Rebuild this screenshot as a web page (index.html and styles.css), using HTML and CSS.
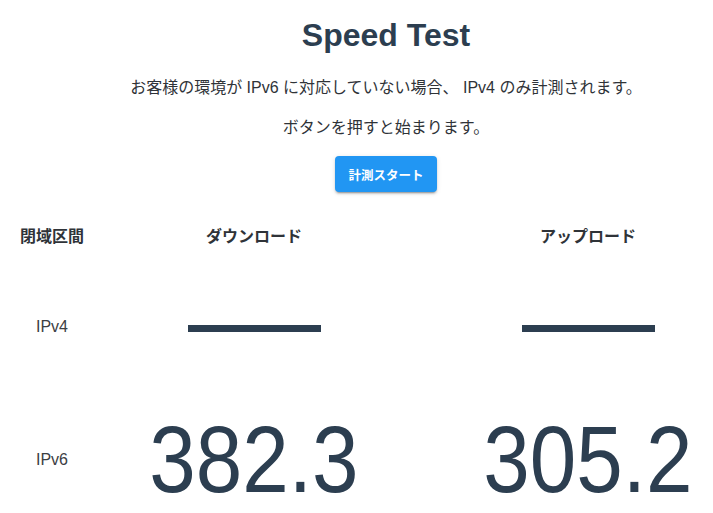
FILE: index.html
```html
<!DOCTYPE html>
<html lang="ja">
<head>
<meta charset="utf-8">
<title>Speed Test</title>
<link rel="stylesheet" href="styles.css">
</head>
<body>
<div class="app">
  <div class="intro">
    <h1 class="title">Speed Test</h1>
    <p class="note">お客様の環境が IPv6 に対応していない場合、 IPv4 のみ計測されます。</p>
    <p class="note">ボタンを押すと始まります。</p>
    <div class="actions">
      <button class="start-btn" type="button">計測スタート</button>
    </div>
  </div>
  <div class="results">
    <div class="cell head">閉域区間</div>
    <div class="cell head">ダウンロード</div>
    <div class="cell head last">アップロード</div>

    <div class="cell label">IPv4</div>
    <div class="cell value"><span class="dash"></span></div>
    <div class="cell value last"><span class="dash"></span></div>

    <div class="cell label">IPv6</div>
    <div class="cell value"><span class="num">382.3</span></div>
    <div class="cell value last"><span class="num">305.2</span></div>
  </div>
</div>
</body>
</html>
```

FILE: styles.css
```css
html, body {
  margin: 0;
  padding: 0;
  overflow: hidden;
  background: #ffffff;
}

.app {
  width: 713px;
  color: #2c3e50;
  font-family: "Liberation Sans", "Noto Sans CJK JP", Arial, sans-serif;
  text-align: center;
}

.intro {
  padding-left: 59px;
}

.title {
  margin: 17px 0 0;
  font-size: 32px;
  font-weight: 700;
  line-height: 37px;
}

.note {
  margin: 16px 0 0;
  font-size: 16px;
  line-height: 24px;
  color: #2f3338;
}

.title + .note {
  margin-top: 22px;
}

.actions {
  margin-top: 16px;
  display: flex;
  justify-content: center;
}

.start-btn {
  width: 102px;
  height: 36px;
  border: none;
  border-radius: 4px;
  background: #2196f3;
  color: #ffffff;
  font-family: "Noto Sans CJK JP", sans-serif;
  font-weight: 700;
  font-size: 12.5px;
  letter-spacing: 0;
  padding: 0;
  box-shadow: 0 3px 1px -2px rgba(0,0,0,.2), 0 2px 2px 0 rgba(0,0,0,.14), 0 1px 5px 0 rgba(0,0,0,.12);
}

.results {
  margin-top: 21px;
  display: grid;
  grid-template-columns: 104px 300px 309px;
  grid-template-rows: 47px 133px 133px;
}

.cell {
  display: flex;
  align-items: center;
  justify-content: center;
}

.cell.last {
  padding-left: 59px;
}

.head {
  font-family: "Noto Sans CJK JP", sans-serif;
  font-weight: 700;
  font-size: 16px;
  color: #2f3338;
  padding-bottom: 4px;
}

.label {
  font-size: 16px;
  color: #3c4043;
}

.dash {
  display: block;
  width: 133px;
  height: 7px;
  background: #2c3e50;
  margin-top: 4px;
}

.num {
  display: inline-block;
  font-family: "Liberation Sans", Arial, sans-serif;
  font-size: 95px;
  line-height: 1;
  transform: scaleX(0.88);
  color: #2c3e50;
}
```
